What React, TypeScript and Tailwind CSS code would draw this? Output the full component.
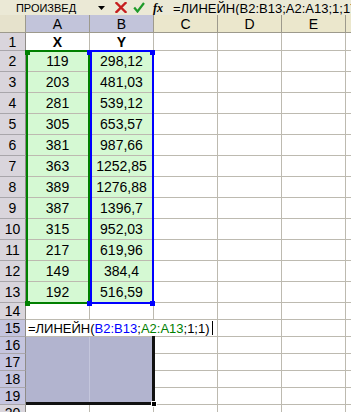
import React from "react";

const data: [string, string][] = [
  ["119", "298,12"],
  ["203", "481,03"],
  ["281", "539,12"],
  ["305", "653,57"],
  ["381", "987,66"],
  ["363", "1252,85"],
  ["389", "1276,88"],
  ["387", "1396,7"],
  ["315", "952,03"],
  ["217", "619,96"],
  ["149", "384,4"],
  ["192", "516,59"],
];

function RowHead({ n, sel, h }: { n: number; sel?: boolean; h: string }) {
  return (
    <div
      className={`w-[26px] shrink-0 ${h} flex items-center justify-center border-r border-b border-r-[#8f8c88] border-b-[#a9a6ab] text-[14px] ${
        sel ? "bg-[#c5c5df]" : "bg-[#d9d5dc]"
      }`}
    >
      {n}
    </div>
  );
}

function Cell({
  h,
  children,
  bg = "bg-white",
  extra = "",
}: {
  h: string;
  children?: React.ReactNode;
  bg?: string;
  extra?: string;
}) {
  return (
    <div
      className={`w-[64px] shrink-0 ${h} ${bg} flex items-center justify-center border-r border-b border-[#bdbab0] text-[14px] ${extra}`}
    >
      {children}
    </div>
  );
}

function EmptyTail({ h }: { h: string }) {
  return (
    <>
      <Cell h={h} />
      <Cell h={h} />
      <Cell h={h} />
      <Cell h={h} />
    </>
  );
}

export default function App() {
  return (
    <div className="w-[351px] h-[412px] overflow-hidden bg-white text-black font-['Liberation_Sans',Arial,sans-serif] leading-none">
      {/* Formula bar */}
      <div className="h-[15px] flex items-center bg-[#ebe9d6] whitespace-nowrap overflow-hidden">
        <div className="w-[92px] shrink-0 flex justify-center text-[11px] pt-[1px]">ПРОИЗВЕД</div>
        <div className="w-[6px] shrink-0 ml-[6px]">
          <svg width="7" height="4" viewBox="0 0 7 4">
            <path d="M0 0 H7 L3.5 4 Z" fill="#000" />
          </svg>
        </div>
        <div className="ml-[11px] shrink-0">
          <svg width="12" height="11" viewBox="0 0 12 11">
            <path d="M1.5 1 L10.5 10 M10.5 1 L1.5 10" stroke="#c61e1e" strokeWidth="2.4" strokeLinecap="square" />
          </svg>
        </div>
        <div className="ml-[6px] shrink-0">
          <svg width="12" height="11" viewBox="0 0 12 11">
            <path d="M1.2 5.5 L4.5 9.5 L11 1" stroke="#1e9a2a" strokeWidth="2.2" fill="none" />
          </svg>
        </div>
        <div className="ml-[8px] shrink-0 font-['Liberation_Serif',serif] italic font-bold text-[12px]">fx</div>
        <div className="ml-[10px] text-[13px] pt-[1px]">=ЛИНЕЙН(B2:B13;A2:A13;1;1)</div>
      </div>

      {/* Grid */}
      <div className="relative">
        {/* Column headers */}
        <div className="flex h-[18px]">
          <div className="w-[26px] shrink-0 h-[18px] bg-[#e6e2cc] border-r border-b border-[#9d9a8c]" />
          {["A", "B", "C", "D", "E", "F"].map((c, i) => (
            <div
              key={c}
              className={`w-[64px] shrink-0 h-[18px] flex items-center justify-center border-r border-b border-[#9d9a8c] text-[14px] ${
                i < 2 ? "bg-[#c2c4da]" : "bg-[#ebe7cc]"
              }`}
            >
              {c}
            </div>
          ))}
        </div>

        {/* Row 1 */}
        <div className="flex">
          <RowHead n={1} h="h-[18px]" />
          <Cell h="h-[18px]" extra="font-bold">X</Cell>
          <Cell h="h-[18px]" extra="font-bold">Y</Cell>
          <EmptyTail h="h-[18px]" />
        </div>

        {/* Rows 2-13 */}
        {data.map(([x, y], i) => (
          <div className="flex" key={i}>
            <RowHead n={i + 2} h="h-[21px]" />
            <Cell h="h-[21px]" bg="bg-[#d5f9d3]">{x}</Cell>
            <Cell h="h-[21px]" bg="bg-[#d5f9d3]">{y}</Cell>
            <EmptyTail h="h-[21px]" />
          </div>
        ))}

        {/* Row 14 */}
        <div className="flex">
          <RowHead n={14} h="h-[17px]" />
          <Cell h="h-[17px]" />
          <Cell h="h-[17px]" />
          <EmptyTail h="h-[17px]" />
        </div>

        {/* Row 15 - editing */}
        <div className="flex">
          <RowHead n={15} sel h="h-[17px]" />
          <div className="w-[192px] shrink-0 h-[17px] bg-white border-r border-b border-[#bdbab0] flex items-center pl-[2px] text-[13px] whitespace-nowrap">
            <span>=ЛИНЕЙН(</span>
            <span className="text-[#0000ff]">B2:B13</span>
            <span>;</span>
            <span className="text-[#008000]">A2:A13</span>
            <span>;1;1)</span>
            <span className="ml-[2px] inline-block w-px h-[14px] bg-black" />
          </div>
          <Cell h="h-[17px]" />
          <Cell h="h-[17px]" />
          <Cell h="h-[17px]" />
        </div>

        {/* Rows 16-19 */}
        {[16, 17, 18, 19].map((n) => (
          <div className="flex" key={n}>
            <RowHead n={n} sel h="h-[17px]" />
            <div className="w-[64px] shrink-0 h-[17px] bg-[#b2b4cf] border-r border-[#c4c6dc]" />
            <div className="w-[64px] shrink-0 h-[17px] bg-[#b2b4cf] border-r border-[#bdbab0]" />
            <EmptyTail h="h-[17px]" />
          </div>
        ))}

        {/* Row 20 */}
        <div className="flex">
          <RowHead n={20} h="h-[17px]" />
          <Cell h="h-[17px]" />
          <Cell h="h-[17px]" />
          <EmptyTail h="h-[17px]" />
        </div>

        {/* Range finder borders */}
        <div className="absolute left-[26px] top-[35px] w-[64px] h-[254px] border-2 border-[#008000] pointer-events-none" />
        <div className="absolute left-[90px] top-[35px] w-[64px] h-[254px] border-2 border-[#0000ff] pointer-events-none" />
        <div className="absolute left-[25px] top-[35px] w-[5px] h-[5px] bg-[#008000]" />
        <div className="absolute left-[87px] top-[35px] w-[5px] h-[5px] bg-[#0000ff]" />
        <div className="absolute left-[150px] top-[35px] w-[5px] h-[5px] bg-[#0000ff]" />
        <div className="absolute left-[25px] top-[286px] w-[5px] h-[5px] bg-[#008000]" />
        <div className="absolute left-[87px] top-[286px] w-[5px] h-[5px] bg-[#0000ff]" />
        <div className="absolute left-[150px] top-[286px] w-[5px] h-[5px] bg-[#0000ff]" />

        {/* Selection border */}
        <div className="absolute left-[26px] top-[321px] w-[129px] h-[69px] border-r-[3px] border-b-[3px] border-[#111] pointer-events-none" />
        <div className="absolute left-[151px] top-[386px] w-[6px] h-[6px] bg-black border border-white" />
      </div>
    </div>
  );
}
